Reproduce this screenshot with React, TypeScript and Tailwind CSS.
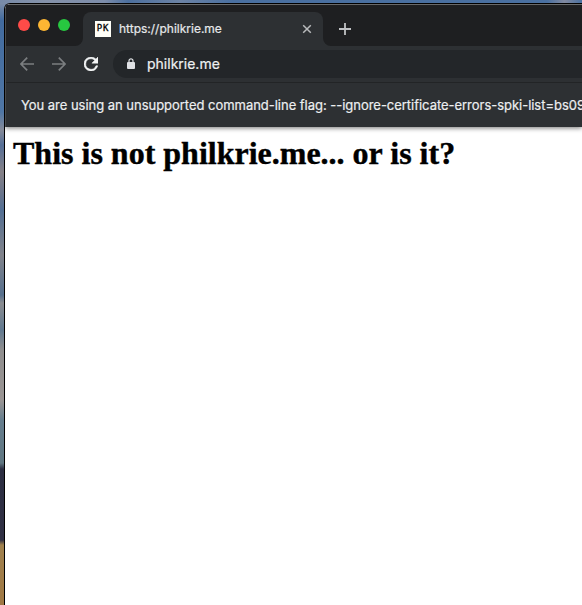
import React from "react";

function TrafficLights() {
  return (
    <div className="flex gap-2 pl-3 pt-[14px]">
      <span className="size-3 rounded-full bg-[#ff4b48]" />
      <span className="size-3 rounded-full bg-[#fdb633]" />
      <span className="size-3 rounded-full bg-[#27c840]" />
    </div>
  );
}

function Favicon() {
  return (
    <span className="flex size-4 shrink-0 items-center justify-center bg-[#fffff8] pb-px font-['DejaVu_Sans_Mono',monospace] text-[9px] leading-none tracking-[0.8px] text-black [-webkit-text-stroke:0.3px_black]">
      PK
    </span>
  );
}

function TabStrip() {
  return (
    <div className="flex h-[41px] bg-[#1e1f21]">
      <div className="w-[77px] shrink-0">
        <TrafficLights />
      </div>
      <div className="relative mt-[7px] flex h-[34px] w-[240px] shrink-0 items-center rounded-t-lg bg-[#2d3033] pl-3 pr-[11px]">
        <svg className="absolute bottom-0 -left-2 size-2" viewBox="0 0 8 8" fill="#2d3033">
          <path d="M8 0v8H0a8 8 0 0 0 8-8Z" />
        </svg>
        <svg className="absolute -right-2 bottom-0 size-2" viewBox="0 0 8 8" fill="#2d3033">
          <path d="M0 0v8h8a8 8 0 0 1-8-8Z" />
        </svg>
        <Favicon />
        <span className="ml-2 text-[12px] leading-4 whitespace-nowrap text-[#e6e8ea] [-webkit-text-stroke:0.2px_#e6e8ea]">https://philkrie.me</span>
        <svg className="ml-auto size-[10px]" viewBox="0 0 10 10" stroke="#b8babc" strokeWidth="1.5">
          <path d="m1.2 1.2 7.6 7.6m0-7.6L1.2 8.8" />
        </svg>
      </div>
      <svg className="mt-[18px] ml-4 size-3" viewBox="0 0 12 12" stroke="#c0c2c5" strokeWidth="1.8">
        <path d="M6 0v12M0 6h12" />
      </svg>
    </div>
  );
}

function Toolbar() {
  return (
    <div className="flex h-9 items-start bg-[#2d3033] pt-1">
      <svg className="mt-[7px] ml-[14px] size-[14px]" viewBox="0 0 14 14" fill="none" stroke="#7b7e80" strokeWidth="1.7">
        <path d="M14 7H1.2M7.2.7.9 7l6.3 6.3" />
      </svg>
      <svg className="mt-[7px] ml-[18px] size-[14px]" viewBox="0 0 14 14" fill="none" stroke="#7b7e80" strokeWidth="1.7">
        <path d="M0 7h12.8M6.8.7 13.1 7l-6.3 6.3" />
      </svg>
      <svg className="mt-[7px] ml-[18px] size-[14px]" viewBox="4 4 16 16" fill="#f4f5f6" stroke="#f4f5f6" strokeWidth=".6">
        <path d="M17.65 6.35A7.95 7.95 0 0 0 12 4a8 8 0 1 0 7.73 10h-2.08A6 6 0 1 1 12 6c1.66 0 3.14.69 4.22 1.78L13 11h7V4Z" />
      </svg>
      <div className="ml-[15px] flex h-7 flex-1 items-center rounded-l-full bg-[#232629] pl-[14px]">
        <svg className="-mt-px h-[11px] w-2" viewBox="0 0 8 11">
          <path d="M2 5V2.8a2 2 0 0 1 4 0V5" fill="none" stroke="#dfe1e4" strokeWidth="1.2" />
          <rect y="4" width="8" height="7" rx="1" fill="#dfe1e4" />
        </svg>
        <span className="ml-3 text-[14px] leading-5 text-[#eef0f1] [-webkit-text-stroke:0.2px_#eef0f1]">philkrie.me</span>
      </div>
    </div>
  );
}

export default function App() {
  return (
    <div className="h-[605px] w-[582px] overflow-hidden bg-[linear-gradient(90deg,#788ba8_0%,#8592aa_8%,#7d8daa_18%,#4c6f9e_22%,#6c83a5_31%,#4a70a1_40%,#4a70a1_94%,#8189a0_97%,#4a70a1_100%),linear-gradient(180deg,#8793a9_0px,#426b9f_20px,#4f76a5_112px,#858a98_130px,#566f97_145px,#858187_172px,#68748c_195px,#536f94_210px,#68788f_230px,#81838b_255px,#566f8d_295px,#8b8d91_303px,#617990_330px,#8f8e8e_350px,#9a9594_400px,#667e8e_420px,#607681_463px,#2c2e42_469px,#303044_540px,#a0814e_545px,#a07844_605px)] bg-[length:100%_3px,100%_100%] bg-no-repeat pt-[3px] pl-1 font-['Inter',sans-serif]">
      <div className="h-[602px] overflow-hidden rounded-tl-md border-t border-l border-black bg-white">
        <div className="rounded-tl-[5px] border-t border-l border-t-[#696a6b] border-l-[#494b4d] bg-[#2d3033] shadow-[0_1px_5px_rgba(0,0,0,0.55)]">
          <TabStrip />
          <Toolbar />
          <div className="h-[45px] overflow-hidden border-t border-[#222426] bg-[#2d3033] pt-[12px] pl-[15px] text-[13px] leading-5 tracking-[-0.028px] whitespace-nowrap text-[#eceef0] [-webkit-text-stroke:0.2px_#eceef0]">
            You are using an unsupported command-line flag: --ignore-certificate-errors-spki-list=bs09
          </div>
        </div>
        <h1 className="pt-[8px] pl-2 font-['Liberation_Serif',serif] text-[32px] leading-9 font-bold whitespace-nowrap text-black [-webkit-text-stroke:0.4px_black]">
          This is not philkrie.me... or is it?
        </h1>
      </div>
    </div>
  );
}
